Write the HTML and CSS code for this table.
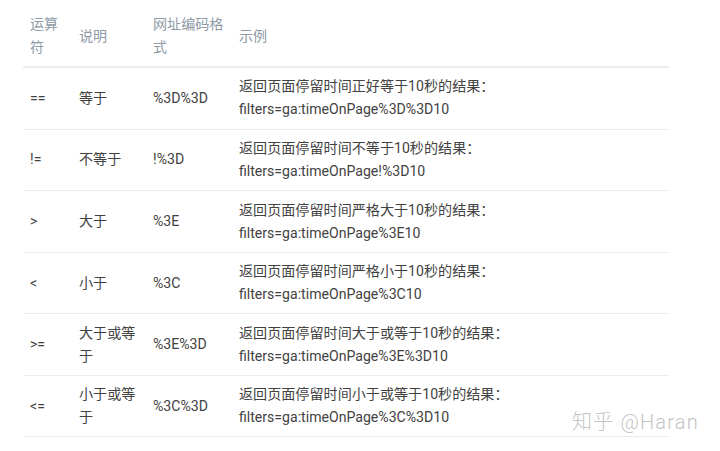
FILE: index.html
```html
<!DOCTYPE html>
<html lang="zh-CN">
<head>
<meta charset="utf-8">
<link rel="stylesheet" href="styles.css">
</head>
<body>
<div class="page">
<table class="ops">
<colgroup>
<col class="c1"><col class="c2"><col class="c3"><col class="c4">
</colgroup>
<thead>
<tr><th>运算符</th><th>说明</th><th>网址编码格式</th><th>示例</th></tr>
</thead>
<tbody>
<tr><td>==</td><td>等于</td><td>%3D%3D</td><td>返回页面停留时间正好等于10秒的结果：<br>filters=ga:timeOnPage%3D%3D10</td></tr>
<tr><td>!=</td><td>不等于</td><td>!%3D</td><td>返回页面停留时间不等于10秒的结果：<br>filters=ga:timeOnPage!%3D10</td></tr>
<tr><td>&gt;</td><td>大于</td><td>%3E</td><td>返回页面停留时间严格大于10秒的结果：<br>filters=ga:timeOnPage%3E10</td></tr>
<tr><td>&lt;</td><td>小于</td><td>%3C</td><td>返回页面停留时间严格小于10秒的结果：<br>filters=ga:timeOnPage%3C10</td></tr>
<tr><td>&gt;=</td><td>大于或等于</td><td>%3E%3D</td><td>返回页面停留时间大于或等于10秒的结果：<br>filters=ga:timeOnPage%3E%3D10</td></tr>
<tr><td>&lt;=</td><td>小于或等于</td><td>%3C%3D</td><td>返回页面停留时间小于或等于10秒的结果：<br>filters=ga:timeOnPage%3C%3D10</td></tr>
</tbody>
</table>
<div class="watermark">知乎 @Haran</div>
</div>
</body>
</html>
```
FILE: styles.css
```css
html, body {
  margin: 0;
  padding: 0;
  background: #ffffff;
}
.page {
  position: relative;
  width: 720px;
  height: 451px;
  overflow: hidden;
  padding: 6px 0 0 23px;
  box-sizing: border-box;
  font-family: Roboto, "Noto Sans CJK SC", sans-serif;
  font-size: 14.1px;
  line-height: 23px;
}
.ops {
  border-collapse: collapse;
  table-layout: fixed;
  width: 646px;
}
.c1 { width: 49px; }
.c2 { width: 74px; }
.c3 { width: 86px; }
.c4 { width: 437px; }
.ops th, .ops td {
  text-align: left;
  vertical-align: middle;
}
.ops th {
  padding: 7px 7px 7px 7px;
  font-weight: normal;
  color: #8e9aa6;
  border-bottom: 2px solid #e8edf0;
}
.ops td {
  padding: 7.4px 7px 7.2px 7px;
  color: #424242;
  border-bottom: 1px solid #ececec;
}
.ops td:last-child {
  white-space: nowrap;
}
.watermark {
  position: absolute;
  left: 572px;
  top: 409px;
  font-size: 20px;
  line-height: 26px;
  font-weight: 300;
  color: #c4c4c4;
  letter-spacing: 1.2px;
}
```
